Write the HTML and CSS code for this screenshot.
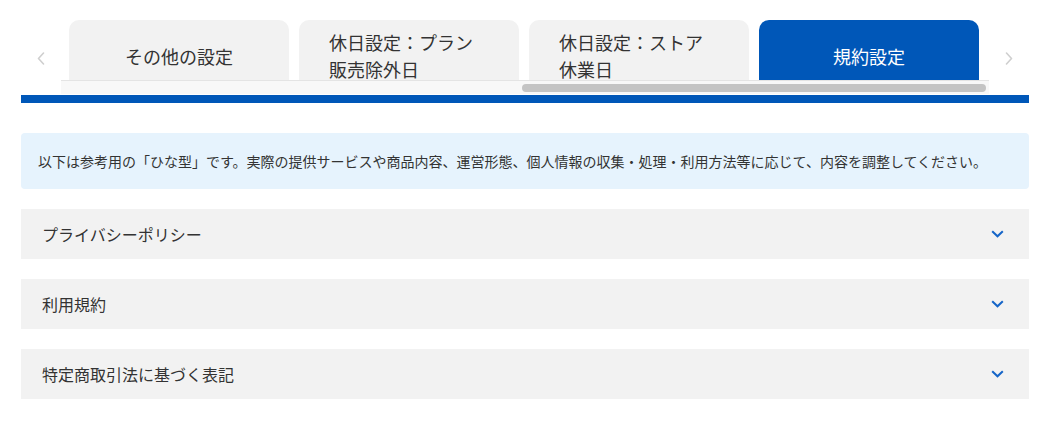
FILE: index.html
```html
<!DOCTYPE html>
<html lang="ja">
<head>
<meta charset="utf-8">
<title>規約設定</title>
<link rel="stylesheet" href="styles.css">
</head>
<body>
<div class="page">
  <div class="tabnav">
    <button class="arrow" aria-label="前へ">
      <svg width="8" height="13" viewBox="0 0 8 13"><path d="M6.5 1 L1.5 6.5 L6.5 12" fill="none" stroke="#cfcfcf" stroke-width="1.6" stroke-linecap="round" stroke-linejoin="round"/></svg>
    </button>
    <div class="tabscroll">
      <div class="tabs">
        <div class="tab"><span>その他の設定</span></div>
        <div class="tab"><span>休日設定：プラン販売除外日</span></div>
        <div class="tab"><span>休日設定：ストア休業日</span></div>
        <div class="tab active"><span>規約設定</span></div>
      </div>
      <div class="scrollbar"><div class="thumb"></div></div>
    </div>
    <button class="arrow" aria-label="次へ">
      <svg width="8" height="13" viewBox="0 0 8 13"><path d="M1.5 1 L6.5 6.5 L1.5 12" fill="none" stroke="#cfcfcf" stroke-width="1.6" stroke-linecap="round" stroke-linejoin="round"/></svg>
    </button>
  </div>
  <div class="rule"></div>
  <div class="notice">以下は参考用の「ひな型」です。実際の提供サービスや商品内容、運営形態、個人情報の収集・処理・利用方法等に応じて、内容を調整してください。</div>
  <div class="accordion">
    <div class="acc-item"><span>プライバシーポリシー</span>
      <svg class="chev" width="13" height="8" viewBox="0 0 13 8"><path d="M1.2 1.2 L6.5 6.3 L11.8 1.2" fill="none" stroke="#1565c8" stroke-width="2"/></svg>
    </div>
    <div class="acc-item"><span>利用規約</span>
      <svg class="chev" width="13" height="8" viewBox="0 0 13 8"><path d="M1.2 1.2 L6.5 6.3 L11.8 1.2" fill="none" stroke="#1565c8" stroke-width="2"/></svg>
    </div>
    <div class="acc-item"><span>特定商取引法に基づく表記</span>
      <svg class="chev" width="13" height="8" viewBox="0 0 13 8"><path d="M1.2 1.2 L6.5 6.3 L11.8 1.2" fill="none" stroke="#1565c8" stroke-width="2"/></svg>
    </div>
  </div>
</div>
</body>
</html>
```
FILE: styles.css
```css
html, body {
  margin: 0;
  padding: 0;
  background: #ffffff;
}
body {
  font-family: "Noto Sans CJK JP", "Noto Sans", sans-serif;
  color: #333333;
}
.page {
  width: 1008px;
  margin-left: 21px;
  padding-top: 20px;
}
.tabnav {
  display: flex;
  align-items: stretch;
}
.arrow {
  width: 40px;
  flex: none;
  border: 0;
  background: transparent;
  padding: 0;
  display: flex;
  align-items: center;
  justify-content: center;
  padding-top: 2px;
}
.tabscroll {
  flex: 1;
  min-width: 0;
}
.tabs {
  display: flex;
  gap: 10px;
  padding-left: 8px;
  height: 60px;
  overflow: hidden;
  align-items: flex-start;
}
.tab {
  flex: none;
  width: 220px;
  height: 72px;
  box-sizing: border-box;
  padding: 0 30px;
  background: #f2f2f2;
  border-radius: 10px;
  display: flex;
  align-items: center;
  justify-content: center;
  font-size: 18px;
  line-height: 27px;
  color: #333333;
}
.tab.active {
  background: #0057b8;
  color: #ffffff;
}
.scrollbar {
  height: 14px;
  box-sizing: border-box;
  background: #f8f8f8;
  border-top: 1px solid #e4e4e4;
  display: flex;
  justify-content: flex-end;
  padding: 3px 3px 0 0;
}
.thumb {
  width: 464px;
  height: 8px;
  border-radius: 4px;
  background: #c4c4c4;
}
.rule {
  height: 8px;
  margin-top: 1px;
  background: #0057b8;
}
.notice {
  margin-top: 30px;
  height: 56px;
  box-sizing: border-box;
  padding: 0 17px;
  display: flex;
  align-items: center;
  background: #e6f3fd;
  border-radius: 4px;
  font-size: 14px;
  color: #333333;
  white-space: nowrap;
}
.accordion {
  margin-top: 20px;
  display: flex;
  flex-direction: column;
  gap: 20px;
}
.acc-item {
  height: 50px;
  box-sizing: border-box;
  padding: 0 25px 0 21px;
  background: #f2f2f2;
  display: flex;
  align-items: center;
  justify-content: space-between;
  font-size: 16px;
  color: #333333;
}
.chev {
  display: block;
}
```
